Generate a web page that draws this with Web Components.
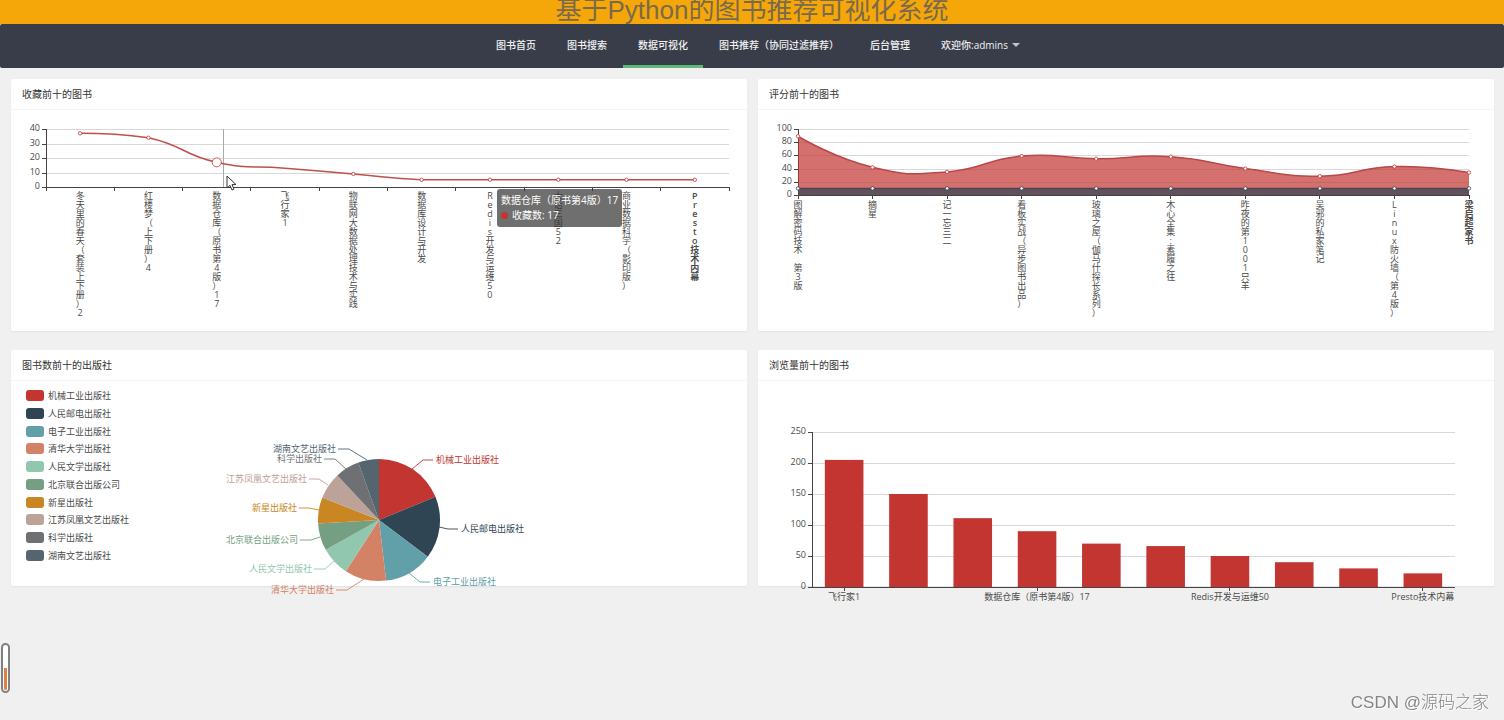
<!DOCTYPE html>
<html lang="zh-CN">
<head>
<meta charset="utf-8">
<meta name="viewport" content="width=device-width, initial-scale=1">
<title>基于Python的图书推荐可视化系统</title>
<style>
  body {
    margin: 0;
    background: #f0f0f0;
    color: #333;
    font-family: "Open Sans", "Noto Sans CJK SC", sans-serif;
    font-size: 10px;
  }
</style>
</head>
<body>
<book-app></book-app>

<script>
const sheet = (css, html) => {
  const t = document.createElement('template');
  t.innerHTML = `<style>*{box-sizing:border-box}${css}</style>${html}`;
  return t;
};

class Base extends HTMLElement {
  constructor() {
    super();
    this.attachShadow({ mode: 'open' });
    this.shadowRoot.append(this.constructor.template.content.cloneNode(true));
  }
}

/* ---------- page header ---------- */
customElements.define('site-banner', class extends Base {
  static template = sheet(`
    :host { display: flex; justify-content: center; align-items: center; height: 24px;
      overflow: hidden; background: #f5a70a; }
    h1 { margin: 0 0 5px; font: 400 26px/30px "Liberation Sans", "Noto Sans CJK SC", sans-serif;
      color: #7a6a4c; white-space: nowrap; }
  `, `<h1><slot></slot></h1>`);
});

customElements.define('nav-item', class extends Base {
  static template = sheet(`
    :host { display: flex; }
    a { display: flex; align-items: center; gap: 4px; padding: 0 15px; color: #f1f2f3;
      font-weight: 500; text-decoration: none; white-space: nowrap; border-bottom: 3px solid transparent; }
    :host([active]) a { border-bottom-color: #5fb878; }
    i { display: none; border: 4px solid transparent; border-top-color: #c3c5c9; border-bottom: 0; }
    :host([menu]) i { display: block; }
    :host([menu]) a { padding-right: 3px; }
  `, `<a href="#"><slot></slot><i></i></a>`);
});

customElements.define('site-nav', class extends Base {
  static template = sheet(`
    :host { display: block; background: #393d49; border-radius: 2px; }
    nav { display: flex; justify-content: center; gap: 1px; height: 44px; }
  `, `<nav><slot></slot></nav>`);
});

/* ---------- card ---------- */
customElements.define('chart-card', class extends Base {
  static template = sheet(`
    :host { display: flex; flex-direction: column; min-width: 0; background: #fff; border-radius: 2px;
      box-shadow: 0 1px 2px rgba(0,0,0,.06); }
    h2 { margin: 0; padding: 0 11px; font-size: 10px; font-weight: 400; line-height: 30px;
      border-bottom: 1px solid #f4f4f4; color: #333; }
    div { position: relative; }
  `, `<h2><slot name="title"></slot></h2><div><slot></slot></div>`);
});

/* ---------- chart helpers ---------- */
const line = (x1, y1, x2, y2, c) =>
  `<line x1="${x1}" y1="${y1}" x2="${x2}" y2="${y2}" stroke="${c}" shape-rendering="crispEdges"/>`;
const label = (x, y, s, anchor = 'middle', fill = '#4a4a4a') =>
  `<text x="${x}" y="${y + 3}" text-anchor="${anchor}" fill="${fill}">${s}</text>`;
const vertical = (x, y, s, last) =>
  `<text fill="#4a4a4a" text-anchor="middle"${last ? ' font-weight="600"' : ''}>` +
  [...s].map((c, i) => c === ' ' ? '' : `<tspan x="${x}" y="${y + i * 9}">${c}</tspan>`).join('') + `</text>`;

/* Smooth line through points, control handles weighted by neighbour distance. */
function smooth(p, k = 0.5) {
  const ys = p.map(a => a[1]), lo = Math.min(...ys), hi = Math.max(...ys);
  const clamp = y => Math.max(lo, Math.min(hi, y));
  const dist = (a, b) => Math.hypot(a[0] - b[0], a[1] - b[1]);
  let d = `M${p[0]}`, c0 = p[0];
  for (let i = 1; i < p.length; i++) {
    let c1 = p[i], next = p[i];
    if (i < p.length - 1) {
      const vx = p[i + 1][0] - p[i - 1][0], vy = p[i + 1][1] - p[i - 1][1];
      const ln = dist(p[i], p[i + 1]), lp = dist(p[i], p[i - 1]), r = ln / (ln + lp);
      c1 = [p[i][0] - vx * k * (1 - r), clamp(p[i][1] - vy * k * (1 - r))];
      next = [p[i][0] + vx * k * r, clamp(p[i][1] + vy * k * r)];
    }
    d += `C${c0} ${c1} ${p[i]}`;
    c0 = next;
  }
  return d;
}

class Chart extends Base {
  static template = sheet(`
    :host { display: block; height: var(--h, 206px); }
    svg { display: block; width: 100%; height: 100%; overflow: visible; font-size: 9px; }
  `, `<svg role="img"></svg>`);
  connectedCallback() {
    this.draw();
    addEventListener('resize', () => this.draw());
  }
  draw() {
    this.shadowRoot.querySelector('svg').innerHTML = this.render(this.clientWidth);
  }
  axis(x0, x1, yTop, yBase, max, step) {
    let s = '';
    for (let v = 0; v <= max; v += step) {
      const y = Math.round(yBase - (yBase - yTop) * v / max);
      if (v) s += line(x0, y, x1, y, '#d8d8d8');
      s += line(x0 - 4, y, x0, y, '#444') + label(x0 - 6, y - 1, v, 'end');
    }
    return s;
  }
}

customElements.define('favorite-chart', class extends Chart {
  render(w) {
    const names = ['冬天里的春天（套装上下册）2', '红楼梦（上下册）4', '数据仓库（原书第4版）17', '飞行家1',
      '物联网大数据处理技术与实践', '数据库设计与开发', 'Redis开发与运维50', '大话三国52', '商业数据科学（影印版）', 'Presto技术内幕'];
    const vals = [37, 34, 17, 13, 9, 5, 5, 5, 5, 5];
    const x0 = 35, x1 = w - 18, top = 19, base = 77, step = (x1 - x0) / 10;
    const pts = vals.map((v, i) => [x0 + step * (i + .5), base - (base - top) * v / 40]);
    let s = this.axis(x0, x1, top, base, 40, 10);
    s += line(x0, top, x0, base, '#444') + line(x0, base, x1, base, '#444');
    for (let i = 0; i <= 10; i++) s += line(x0 + step * i, base, x0 + step * i, base + 4, '#444');
    s += line(x0 + 177, top, x0 + 177, base, '#aaa');
    s += `<path d="${smooth(pts)}" fill="none" stroke="#c0504d" stroke-width="1.5"/>`;
    pts.forEach(([x, y], i) => {
      if (i !== 3) s += `<circle cx="${x}" cy="${y}" r="${i === 2 ? 4.5 : 1.7}" fill="#fff" stroke="#c23531" stroke-width=".8"/>`;
    });
    names.forEach((n, i) => s += vertical(pts[i][0], 89, n, i === 9));
    return s;
  }
});

customElements.define('rating-chart', class extends Chart {
  render(w) {
    const names = ['图解密码技术 第3版', '摘星', '记一忘三二', '看板实战（异步图书出品）', '玻璃之屋（伽马什探长系列）',
      '木心全集:素履之往', '昨夜的第1001只羊', '吴邪的私家笔记', 'Linux防火墙（第4版）', '梁启超家书'];
    const vals = [89, 42, 35, 59, 55, 58, 40, 28.5, 43, 34];
    const x0 = 40, x1 = w - 25, top = 19, base = 85, step = (x1 - x0) / 9;
    const y = v => base - (base - top) * v / 100;
    const pts = vals.map((v, i) => [x0 + step * i, y(v)]);
    let s = this.axis(x0, x1, top, base, 100, 20);
    s += line(x0, top, x0, base, '#444') + line(x0, base, x1, base, '#444');
    s += `<path d="${smooth(pts)}L${x1} ${base}L${x0} ${base}Z" fill="#c23531" fill-opacity=".7"/>`;
    s += `<rect x="${x0}" y="${y(10)}" width="${x1 - x0}" height="${base - y(10)}" fill="#2f4554" fill-opacity=".7"/>`;
    s += `<path d="${smooth(pts)}" fill="none" stroke="#b8474a" stroke-width="1.5"/>`;
    s += `<path d="M${x0} ${y(10)}H${x1}" stroke="#4e4450" stroke-width="1.5"/>`;
    pts.forEach(([x, py], i) => {
      s += `<circle cx="${x}" cy="${py}" r="1.7" fill="#fff" stroke="#c23531" stroke-width=".8"/>`;
      s += `<circle cx="${x}" cy="${y(10)}" r="1.7" fill="#fff" stroke="#2f4554" stroke-width=".8"/>`;
      s += line(x, base, x, base + 4, '#444') + vertical(x, 98, names[i], i === 9);
    });
    return s;
  }
});

customElements.define('views-chart', class extends Chart {
  render(w) {
    const vals = [205, 150, 111, 90, 70, 66, 50, 40, 30, 22];
    const names = { 0: '飞行家1', 3: '数据仓库（原书第4版）17', 6: 'Redis开发与运维50', 9: 'Presto技术内幕' };
    const x0 = 54, x1 = w - 39, top = 51, base = 206, step = (x1 - x0) / 10;
    let s = this.axis(x0, x1, top, base, 250, 50) + line(x0, top, x0, base, '#444');
    vals.forEach((v, i) => {
      const h = (base - top) * v / 250;
      s += `<rect x="${x0 + step * (i + .2)}" y="${base - h}" width="${step * .6}" height="${h}" fill="#c23531"/>`;
    });
    s += line(x0, base, x1, base, '#444');
    for (const i in names) {
      const x = x0 + step * (+i + .5);
      s += line(x, base, x, base + 4, '#444') + label(x, base + 10, names[i]);
    }
    return s;
  }
});

const publishers = [
  ['机械工业出版社', '#c23531', 67.7, [33, -51, 44, -60, 54, -60]],
  ['人民邮电出版社', '#2f4554', 126.9, [60, 7, 69, 9, 79, 9]],
  ['电子工业出版社', '#61a0a8', 173.3, [30, 53, 41, 62, 51, 62]],
  ['清华大学出版社', '#d48265', 213, [-15, 59, -32, 70, -43, 70]],
  ['人民文学出版社', '#91c7ae', 240.8, [-45, 41, -54, 49, -65, 49]],
  ['北京联合出版公司', '#749f83', 266.8, [-59, 17, -68, 20, -79, 20]],
  ['新星出版社', '#ca8622', 291.7, [-60, -10, -70, -12, -80, -12]],
  ['江苏凤凰文艺出版社', '#bda29a', 317, [-51, -35, -60, -41, -70, -41]],
  ['科学出版社', '#6e7074', 340.2, [-33, -51, -44, -61, -55, -61]],
  ['湖南文艺出版社', '#546570', 360, [-12, -60, -30, -71, -41, -71]]
];

customElements.define('publisher-pie', class extends Chart {
  render(w) {
    const r = 61, cx = w / 2, cy = 139;
    const at = a => [cx + r * Math.sin(a * Math.PI / 180), cy - r * Math.cos(a * Math.PI / 180)];
    let from = 0, s = '';
    for (const [name, color, to, [a, b, c, d, e, f]] of publishers) {
      s += `<path d="M${cx} ${cy}L${at(from)}A${r} ${r} 0 0 1 ${at(to)}Z" fill="${color}"/>`;
      s += `<path d="M${cx + a} ${cy + b}L${cx + c} ${cy + d}L${cx + e} ${cy + f}" fill="none" stroke="${color}" stroke-width=".9"/>`;
      s += label(cx + e + (e > 0 ? 3 : -2), cy + f, name, e > 0 ? 'start' : 'end', color);
      from = to;
    }
    return s;
  }
});

customElements.define('publisher-legend', class extends Base {
  static template = sheet(`
    :host { position: absolute; top: 0; bottom: 0; left: 0; font-size: 9px; color: #4a4a4a; }
    ul { display: flex; flex-direction: column; justify-content: space-between; height: 100%;
      margin: 0; padding: 9px 0 25px 15px; list-style: none; }
    li { display: flex; align-items: center; gap: 4px; line-height: 11px; height: 11px; }
    i { width: 18px; height: 11px; border-radius: 3px; }
  `, `<ul>${publishers.map(([n, c]) => `<li><i style="background:${c}"></i>${n}</li>`).join('')}</ul>`);
});

/* ---------- overlays ---------- */
customElements.define('chart-tooltip', class extends Base {
  static template = sheet(`
    :host { position: absolute; left: 486px; top: 79px; padding: 4px; border-radius: 3px;
      background: rgba(50,50,50,.7); color: #fff; line-height: 15px; white-space: nowrap; }
    div { display: flex; align-items: center; gap: 4px; }
    i { width: 7px; height: 7px; border-radius: 50%; background: #c23531; }
  `, `<div><slot name="name"></slot></div><div><i></i><slot></slot></div>`);
});

customElements.define('mouse-pointer', class extends Base {
  static template = sheet(`
    :host { position: absolute; left: 215px; top: 65px; }
    svg { display: block; }
  `, `<svg width="12" height="17" viewBox="0 0 12 17"><path d="M1 1v12l3-2.600 2 4.600 2-.9-2-4.500h4z" fill="#fff" stroke="#333"/></svg>`);
});

customElements.define('level-gauge', class extends Base {
  static template = sheet(`
    :host { position: fixed; left: 1px; bottom: 27px; width: 9px; height: 50px; padding: 1px; display: flex;
      align-items: flex-end; border: 2px solid #808080; border-radius: 5px; background: #fff; }
    i { flex: 1; height: 50%; border-radius: 0 0 2px 2px; background: #dd8244; }
  `, `<i></i>`);
});

customElements.define('corner-mark', class extends Base {
  static template = sheet(`
    :host { position: fixed; right: 15px; bottom: 5px; font: 300 17px/24px "Liberation Sans", "Noto Sans CJK SC", sans-serif;
      color: #858585; text-shadow: 1px 1px 0 #fff; white-space: nowrap; }
  `, `<slot></slot>`);
});

/* ---------- page ---------- */
customElements.define('book-app', class extends Base {
  static template = sheet(`
    :host { display: block; min-height: 100vh; }
    main { display: grid; grid-template-columns: minmax(0, 1fr) minmax(0, 1fr); gap: 19px 11px; padding: 11px 10px 30px 11px; }
    favorite-chart, rating-chart { --h: 221px; }
    publisher-pie, views-chart { --h: 205px; }
  `, `
    <site-banner>基于Python的图书推荐可视化系统</site-banner>
    <site-nav>
      <nav-item>图书首页</nav-item>
      <nav-item>图书搜索</nav-item>
      <nav-item active>数据可视化</nav-item>
      <nav-item>图书推荐（协同过滤推荐）</nav-item>
      <nav-item>后台管理</nav-item>
      <nav-item menu>欢迎你:admins</nav-item>
    </site-nav>
    <main>
      <chart-card>
        <span slot="title">收藏前十的图书</span>
        <favorite-chart></favorite-chart>
        <chart-tooltip><span slot="name">数据仓库（原书第4版）17</span>收藏数: 17</chart-tooltip>
        <mouse-pointer></mouse-pointer>
      </chart-card>
      <chart-card>
        <span slot="title">评分前十的图书</span>
        <rating-chart></rating-chart>
      </chart-card>
      <chart-card>
        <span slot="title">图书数前十的出版社</span>
        <publisher-pie></publisher-pie>
        <publisher-legend></publisher-legend>
      </chart-card>
      <chart-card>
        <span slot="title">浏览量前十的图书</span>
        <views-chart></views-chart>
      </chart-card>
    </main>
    <level-gauge></level-gauge>
    <corner-mark>CSDN @源码之家</corner-mark>
  `);
});
</script>
</body>
</html>
